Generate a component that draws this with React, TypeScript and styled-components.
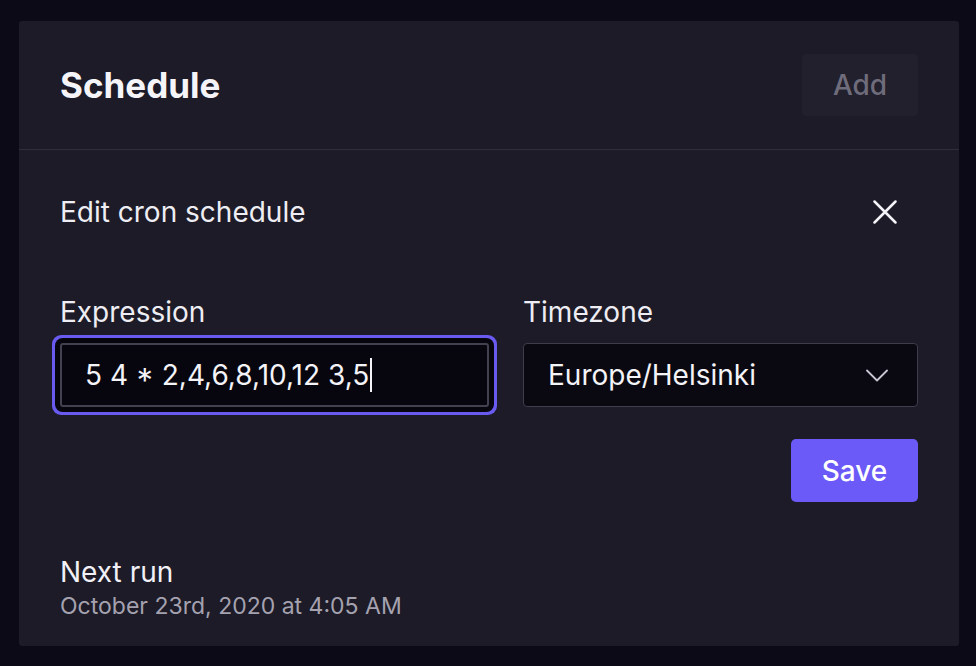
import React from "react";
import styled, { createGlobalStyle } from "styled-components";

const Global = createGlobalStyle`
  html, body {
    margin: 0;
    padding: 0;
    background: #0b0a16;
  }
  body {
    font-family: Inter, "Noto Sans", sans-serif;
    color: #f4f3f8;
  }
  * { box-sizing: border-box; }
`;

const Page = styled.div`
  padding: 21px 17px 0 19px;
  min-height: 666px;
  background: #0b0a16;
`;

const Card = styled.section`
  background: #1c1b27;
  border-radius: 3px;
  height: 625px;
  display: flex;
  flex-direction: column;
`;

const Header = styled.header`
  height: 129px;
  padding: 0 41px;
  display: flex;
  align-items: center;
  justify-content: space-between;
  border-bottom: 1px solid #2f2e3b;
`;

const Title = styled.h1`
  margin: 0;
  font-size: 35px;
  font-weight: 700;
  color: #f5f4f9;
`;

const GhostButton = styled.button`
  width: 116px;
  height: 62px;
  margin-top: -1px;
  border: none;
  border-radius: 4px;
  background: #21202c;
  color: #6f6c7c;
  font-family: inherit;
  font-size: 28px;
  font-weight: 500;
`;

const Body = styled.div`
  padding: 42px 41px 0 41px;
  display: flex;
  flex-direction: column;
`;

const EditRow = styled.div`
  height: 40px;
  display: flex;
  align-items: center;
  justify-content: space-between;
`;

const EditTitle = styled.h2`
  margin: 0;
  font-size: 28px;
  font-weight: 400;
  color: #eeedf3;
`;

const CloseButton = styled.button`
  width: 40px;
  height: 40px;
  margin-right: 13px;
  padding: 0;
  border: none;
  background: transparent;
  display: flex;
  align-items: center;
  justify-content: center;
  color: #f4f3f8;
`;

const Fields = styled.div`
  margin-top: 63px;
  display: grid;
  grid-template-columns: 429px 1fr;
  column-gap: 34px;
`;

const Field = styled.div`
  display: flex;
  flex-direction: column;
`;

const Label = styled.label`
  height: 34px;
  line-height: 34px;
  font-size: 28px;
  font-weight: 400;
  color: #eeedf3;
  margin-bottom: 14px;
`;

const FakeInput = styled.div`
  height: 64px;
  border: 2px solid #43414f;
  border-radius: 3px;
  background: #07060f;
  box-shadow: 0 0 0 5px #07060f, 0 0 0 8px #6a5bf0;
  display: flex;
  align-items: center;
  padding-left: 23px;
  font-size: 28px;
  color: #f4f3f8;
  white-space: pre;
`;

const Caret = styled.span`
  display: inline-block;
  width: 2px;
  height: 34px;
  background: #f4f3f8;
  margin-left: 1px;
`;

const Select = styled.div`
  height: 64px;
  border: 1px solid #3f3d4b;
  border-radius: 4px;
  background: #0a0912;
  display: flex;
  align-items: center;
  justify-content: space-between;
  padding: 0 29px 0 24px;
  font-size: 28px;
  color: #f4f3f8;
`;

const Actions = styled.div`
  margin-top: 32px;
  display: flex;
  justify-content: flex-end;
`;

const PrimaryButton = styled.button`
  width: 127px;
  height: 63px;
  border: none;
  border-radius: 5px;
  background: #6b5af8;
  color: #ffffff;
  font-family: inherit;
  font-size: 28px;
  font-weight: 500;
`;

const NextRun = styled.div`
  margin-top: 53px;
  display: flex;
  flex-direction: column;
  gap: 4px;
`;

const NextLabel = styled.div`
  height: 34px;
  line-height: 34px;
  font-size: 28px;
  color: #f1f0f6;
`;

const NextDate = styled.div`
  height: 26px;
  line-height: 26px;
  font-size: 23px;
  color: #a5a2b0;
`;

const CloseIcon = () => (
  <svg width="24" height="24" viewBox="0 0 24 24" fill="none">
    <path d="M1.5 1.5 L22.5 22.5 M22.5 1.5 L1.5 22.5" stroke="currentColor" strokeWidth="2.5" strokeLinecap="round" />
  </svg>
);

const Chevron = () => (
  <svg width="22" height="13" viewBox="0 0 22 13" fill="none">
    <path d="M1 1.5 L11 11.5 L21 1.5" stroke="#c9c7d1" strokeWidth="1.8" strokeLinecap="round" strokeLinejoin="round" />
  </svg>
);

export default function App() {
  return (
    <>
      <Global />
      <Page>
        <Card>
          <Header>
            <Title>Schedule</Title>
            <GhostButton>Add</GhostButton>
          </Header>
          <Body>
            <EditRow>
              <EditTitle>Edit cron schedule</EditTitle>
              <CloseButton aria-label="Close">
                <CloseIcon />
              </CloseButton>
            </EditRow>
            <Fields>
              <Field>
                <Label>Expression</Label>
                <FakeInput>
                  5 4 * 2,4,6,8,10,12 3,5
                  <Caret />
                </FakeInput>
              </Field>
              <Field>
                <Label>Timezone</Label>
                <Select>
                  <span>Europe/Helsinki</span>
                  <Chevron />
                </Select>
              </Field>
            </Fields>
            <Actions>
              <PrimaryButton>Save</PrimaryButton>
            </Actions>
            <NextRun>
              <NextLabel>Next run</NextLabel>
              <NextDate>October 23rd, 2020 at 4:05 AM</NextDate>
            </NextRun>
          </Body>
        </Card>
      </Page>
    </>
  );
}
